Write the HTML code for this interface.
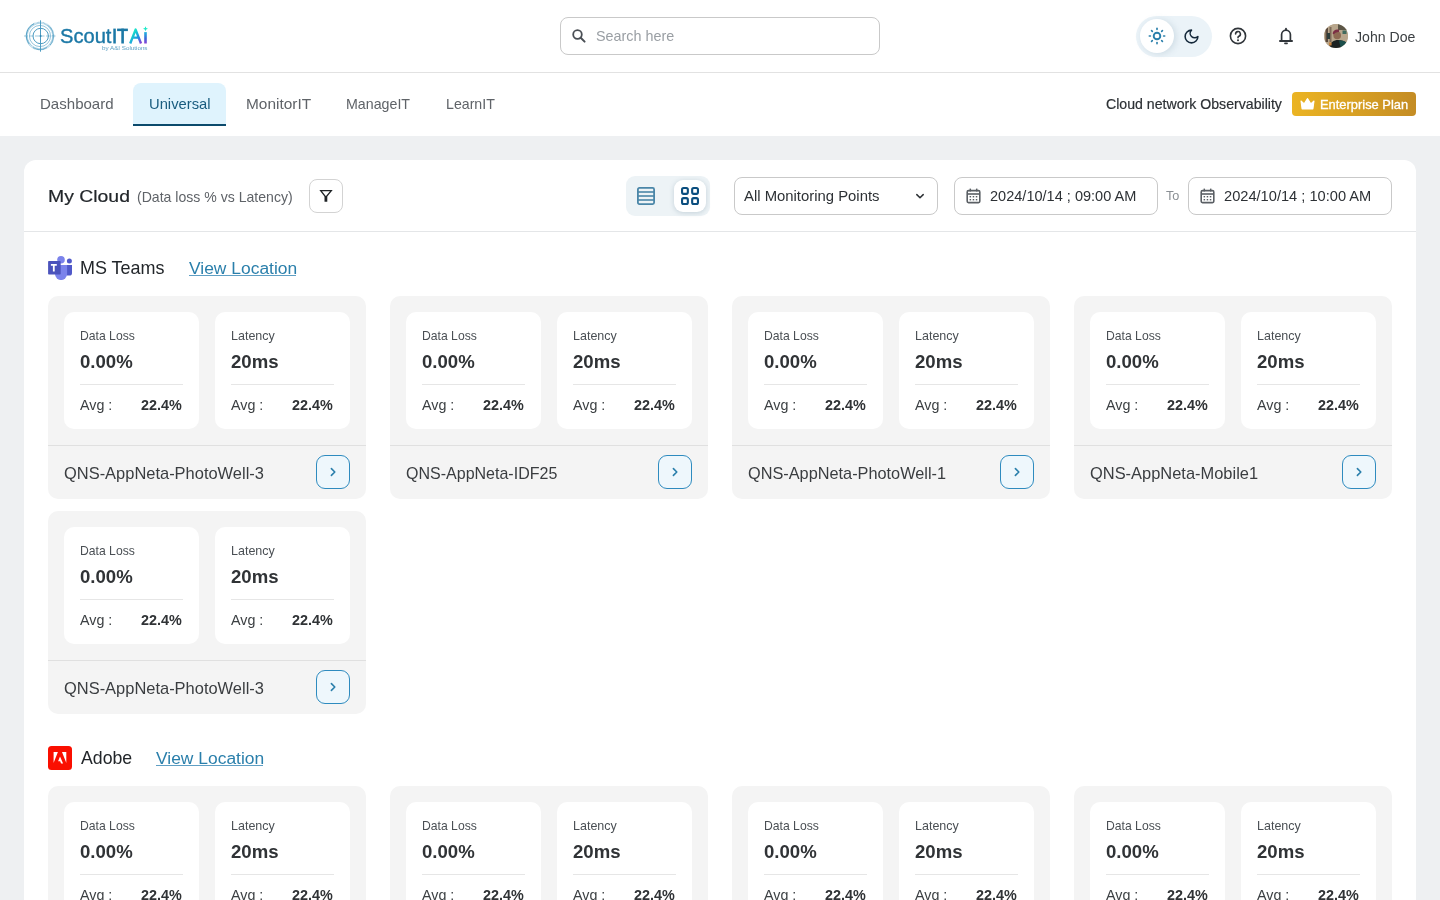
<!DOCTYPE html><html><head><meta charset="utf-8"><title>ScoutITAi</title><style>
*{margin:0;padding:0;box-sizing:border-box}
html,body{width:1440px;height:900px;overflow:hidden}
body{background:#eef0f2;font-family:"Liberation Sans",sans-serif;position:relative}
.abs,.t{position:absolute}
.t{white-space:nowrap;transform-origin:0 0}
#hdr{position:absolute;left:0;top:0;width:1440px;height:72px;background:#fff;border-bottom:1px solid #e2e2e2;height:73px}
#nav{position:absolute;left:0;top:73px;width:1440px;height:63px;background:#fff}
.card{position:absolute;width:318px;height:203px;background:#f4f4f4;border-radius:10px}
.inner{position:absolute;width:135px;height:117px;background:#fff;border-radius:10px}
.btn{width:34px;height:34px;border:1px solid #2e8bbf;border-radius:9px;background:#eef7fc}
</style></head><body><div id="hdr"></div><div id="nav"></div>
<svg class="abs" style="left:22px;top:18px" width="38" height="36" viewBox="0 0 38 36">
<g fill="none" stroke="#4d9cc2">
<circle cx="18" cy="18" r="13.2" stroke-width="2.2" stroke="#8dc0da" stroke-dasharray="0.7 0.5"/>
<path d="M7.2 26 A13.2 13.2 0 0 1 12 5.8" stroke-width="1" opacity=".9"/>
<path d="M25.5 7.2 A13.2 13.2 0 0 1 28 27" stroke-width="0.9" opacity=".8"/>
<path d="M25 29.5 A13.2 13.2 0 0 1 11 29.5" stroke-width="0.9" opacity=".8"/>
<circle cx="18" cy="18" r="10.6" stroke-width="0.8" opacity=".75"/>
<circle cx="18.7" cy="18" r="7.7" stroke-width="1"/>
<line x1="18.5" y1="2.3" x2="18.5" y2="33.7" stroke-width="1"/>
<line x1="2" y1="18" x2="35" y2="18" stroke-width="1" stroke-dasharray="4 1.5" opacity=".55"/>
</g><circle cx="18.5" cy="18" r="1.1" fill="#2f86b3"/></svg>
<div class="t" style="left:59.99px;top:25.00px;font-size:21px;line-height:21px;font-weight:400;color:#1b78a6;transform:scaleX(0.9581);-webkit-text-stroke:0.4px #1b78a6;">Scout</div>
<svg class="abs" style="left:110px;top:24px" width="40" height="22" viewBox="110 24 40 22">
<defs><linearGradient id="ga" x1="0" y1="0" x2="1" y2="1"><stop offset="0.15" stop-color="#16f0c6"/><stop offset="0.65" stop-color="#1e8fe0"/><stop offset="1" stop-color="#8a3fd6"/></linearGradient>
<linearGradient id="gi" x1="0" y1="0" x2="0" y2="1"><stop offset="0" stop-color="#1fb7e0"/><stop offset="0.55" stop-color="#3a6ad8"/><stop offset="1" stop-color="#8a3fd6"/></linearGradient></defs>
<rect x="113.3" y="28.6" width="2.5" height="14.9" fill="#1b78a6"/>
<rect x="117.1" y="28.6" width="10.8" height="2.5" fill="#1b78a6"/><rect x="121.3" y="28.6" width="2.6" height="14.9" fill="#1b78a6"/>
<path d="M130.2 43.5 L135.6 29.6 L141 43.5 M132.6 37.6 H138.6" fill="none" stroke="url(#ga)" stroke-width="2.4" stroke-linejoin="round"/>
<rect x="144.2" y="32.1" width="2.6" height="11.4" fill="url(#gi)"/>
<path d="M145.5 26.3 L146.2 28.1 L148 28.8 L146.2 29.5 L145.5 31.3 L144.8 29.5 L143 28.8 L144.8 28.1Z" fill="#1de9c8"/>
</svg>
<div class="t" style="left:101.62px;top:45.00px;font-size:6.2px;line-height:6.2px;font-weight:400;color:#5b9fc2;transform:scaleX(1.0095);">by A&amp;I Solutions</div>
<div class="abs" style="left:560px;top:17px;width:320px;height:38px;border:1px solid #c9c9c9;border-radius:8px;background:#fff"></div>
<svg class="abs" style="left:570px;top:27px" width="18" height="18" viewBox="0 0 18 18"><circle cx="7.5" cy="7.5" r="4.3" fill="none" stroke="#4a4f55" stroke-width="1.8"/><line x1="10.7" y1="10.7" x2="14.6" y2="14.6" stroke="#4a4f55" stroke-width="2" stroke-linecap="round"/></svg>
<div class="t" style="left:595.88px;top:29.00px;font-size:14.5px;line-height:14.5px;font-weight:400;color:#9a9fa4;transform:scaleX(0.9900);">Search here</div>
<div class="abs" style="left:1136px;top:15.5px;width:76px;height:41px;border-radius:21px;background:#ebf3f8"></div>
<div class="abs" style="left:1140px;top:19px;width:34px;height:34px;border-radius:17px;background:#fff;box-shadow:2px 1px 6px rgba(120,150,170,.25)"></div>
<svg class="abs" style="left:1145px;top:24px" width="24" height="24" viewBox="0 0 24 24"><circle cx="12" cy="12" r="3.3" fill="none" stroke="#2a7fab" stroke-width="1.9"/><line x1="18.60" y1="12.00" x2="19.70" y2="12.00" stroke="#2a7fab" stroke-width="1.6" stroke-linecap="round"/><line x1="16.67" y1="16.67" x2="17.44" y2="17.44" stroke="#2a7fab" stroke-width="1.6" stroke-linecap="round"/><line x1="12.00" y1="18.60" x2="12.00" y2="19.70" stroke="#2a7fab" stroke-width="1.6" stroke-linecap="round"/><line x1="7.33" y1="16.67" x2="6.56" y2="17.44" stroke="#2a7fab" stroke-width="1.6" stroke-linecap="round"/><line x1="5.40" y1="12.00" x2="4.30" y2="12.00" stroke="#2a7fab" stroke-width="1.6" stroke-linecap="round"/><line x1="7.33" y1="7.33" x2="6.56" y2="6.56" stroke="#2a7fab" stroke-width="1.6" stroke-linecap="round"/><line x1="12.00" y1="5.40" x2="12.00" y2="4.30" stroke="#2a7fab" stroke-width="1.6" stroke-linecap="round"/><line x1="16.67" y1="7.33" x2="17.44" y2="6.56" stroke="#2a7fab" stroke-width="1.6" stroke-linecap="round"/></svg>
<svg class="abs" style="left:1182.5px;top:27.8px" width="17" height="17" viewBox="0 0 24 24"><path d="M12 3a6 6 0 0 0 9 9 9 9 0 1 1-9-9Z" fill="none" stroke="#14283a" stroke-width="2.2" stroke-linejoin="round"/></svg>
<svg class="abs" style="left:1226px;top:24px" width="24" height="24" viewBox="0 0 24 24"><circle cx="12" cy="12" r="7.6" fill="none" stroke="#30353a" stroke-width="1.6"/><path d="M9.6 10 A2.4 2.4 0 1 1 12.9 12.2 C12.2 12.5 12 12.9 12 13.7" fill="none" stroke="#30353a" stroke-width="1.6" stroke-linecap="round"/><circle cx="12" cy="16.3" r="1" fill="#30353a"/></svg>
<svg class="abs" style="left:1274px;top:24px" width="24" height="24" viewBox="0 0 24 24"><path d="M7.6 17 V10.6 A4.4 4.4 0 0 1 16.4 10.6 V17" fill="none" stroke="#30353a" stroke-width="1.7"/><line x1="6" y1="17.1" x2="18" y2="17.1" stroke="#30353a" stroke-width="2" stroke-linecap="round"/><line x1="12" y1="4.6" x2="12" y2="6" stroke="#30353a" stroke-width="1.8" stroke-linecap="round"/><path d="M10.9 19.4 H13.1" stroke="#30353a" stroke-width="1.6" stroke-linecap="round"/></svg>
<svg class="abs" style="left:1324px;top:24px" width="24" height="24" viewBox="0 0 24 24"><defs><clipPath id="av"><circle cx="12" cy="12" r="12"/></clipPath><filter id="bl" x="-20%" y="-20%" width="140%" height="140%"><feGaussianBlur stdDeviation="0.45"/></filter></defs><g clip-path="url(#av)"><rect width="24" height="24" fill="#b8a68c"/><g filter="url(#bl)">
<rect x="-1" y="-1" width="26" height="26" fill="#b8a68c"/>
<rect x="1.5" y="4" width="2.5" height="14" fill="#5a4a3c"/><rect x="5.5" y="3" width="2" height="15" fill="#7d6b58"/><rect x="3" y="9" width="3" height="6" fill="#2e3c3a"/>
<rect x="14" y="0" width="10" height="6" fill="#5b5646"/><rect x="18.5" y="6.5" width="4" height="3.5" fill="#3f6a5c"/>
<circle cx="13.2" cy="11.4" r="3.8" fill="#8e6a52"/>
<path d="M8.6 9.2 Q10 4.8 14.5 5.6 Q15.6 6.6 15 8 Q11.5 7.5 9.5 10.5Z" fill="#7c2d45"/>
<path d="M4 25 Q6 17 12.5 16 Q19 15.5 23 19 V25Z" fill="#1a2322"/><path d="M15 16.5 Q21 16 24 20 V25 H17Z" fill="#1e4f4c"/>
<rect x="5" y="18.5" width="2.6" height="3" fill="#c47f3a"/>
</g></g></svg>
<div class="t" style="left:1355.32px;top:29.00px;font-size:15px;line-height:15px;font-weight:400;color:#3c4043;transform:scaleX(0.9390);">John Doe</div>
<div class="abs" style="left:133px;top:83px;width:93px;height:41px;background:#dff3fd;border-radius:8px 8px 0 0"></div>
<div class="abs" style="left:133px;top:124px;width:93px;height:2px;background:#0b4a6c"></div>
<div class="t" style="left:39.60px;top:97.00px;font-size:14.3px;line-height:14.3px;font-weight:400;color:#5f6368;transform:scaleX(1.0526);">Dashboard</div>
<div class="t" style="left:148.82px;top:97.00px;font-size:14.3px;line-height:14.3px;font-weight:400;color:#195c7f;transform:scaleX(1.0325);">Universal</div>
<div class="t" style="left:245.77px;top:97.00px;font-size:14.3px;line-height:14.3px;font-weight:400;color:#5f6368;transform:scaleX(1.0778);">MonitorIT</div>
<div class="t" style="left:346.16px;top:97.00px;font-size:14.3px;line-height:14.3px;font-weight:400;color:#5f6368;transform:scaleX(0.9949);">ManageIT</div>
<div class="t" style="left:445.87px;top:97.00px;font-size:14.3px;line-height:14.3px;font-weight:400;color:#5f6368;transform:scaleX(0.9915);">LearnIT</div>
<div class="t" style="left:1106.19px;top:97.00px;font-size:14.6px;line-height:14.6px;font-weight:400;color:#2d3135;transform:scaleX(0.9683);-webkit-text-stroke:0.2px #2d3135;">Cloud network Observability</div>
<div class="abs" style="left:1292px;top:92.3px;width:124px;height:24px;border-radius:4px;background:linear-gradient(90deg,#ebb423,#c48c24)"></div>
<svg class="abs" style="left:1299px;top:96px" width="17" height="17" viewBox="0 0 17 17"><path d="M2 5 L5.2 7.8 L8.5 2.6 L11.8 7.8 L15 5 L13.9 13 H3.1Z" fill="#fff" stroke="#fff" stroke-width="1.1" stroke-linejoin="round"/></svg>
<div class="t" style="left:1320.17px;top:99.00px;font-size:12.8px;line-height:12.8px;font-weight:400;color:#fff;transform:scaleX(1.0078);-webkit-text-stroke:0.3px #fff;">Enterprise Plan</div>
<div class="abs" style="left:24px;top:160px;width:1392px;height:760px;background:#fff;border-radius:12px"></div>
<div class="abs" style="left:24px;top:231px;width:1392px;height:1px;background:#e4e6e8"></div>
<div class="t" style="left:47.65px;top:188.00px;font-size:17.4px;line-height:17.4px;font-weight:400;color:#22262a;transform:scaleX(1.1156);-webkit-text-stroke:0.2px #22262a;">My Cloud</div>
<div class="t" style="left:136.96px;top:190.00px;font-size:14.8px;line-height:14.8px;font-weight:400;color:#5f6368;transform:scaleX(0.9511);">(Data loss % vs Latency)</div>
<div class="abs" style="left:309px;top:179px;width:34px;height:34px;border:1px solid #d3d3d3;border-radius:8px;background:#fff"></div>
<svg class="abs" style="left:317px;top:187px" width="18" height="18" viewBox="0 0 18 18"><path d="M3.7 3.7 H14.3 L8.85 10.2Z" fill="none" stroke="#1f2326" stroke-width="1.3" stroke-linejoin="miter"/><rect x="7.5" y="9.3" width="2.8" height="5.5" rx="0.4" fill="#1f2326"/></svg>
<div class="abs" style="left:626px;top:176px;width:84px;height:40px;border-radius:9px;background:#edf3f6"></div>
<div class="abs" style="left:674px;top:180px;width:32px;height:32px;border-radius:9px;background:#fff;box-shadow:0 1px 5px rgba(100,130,150,.3)"></div>
<svg class="abs" style="left:637px;top:187px" width="18" height="18" viewBox="0 0 18 18"><rect x="0.9" y="0.9" width="16.2" height="16.2" rx="1.5" fill="none" stroke="#4a86a8" stroke-width="1.8"/><line x1="1" y1="5" x2="17" y2="5" stroke="#4a86a8" stroke-width="1.6"/><line x1="1" y1="9" x2="17" y2="9" stroke="#4a86a8" stroke-width="1.6"/><line x1="1" y1="13" x2="17" y2="13" stroke="#4a86a8" stroke-width="1.6"/></svg>
<svg class="abs" style="left:681px;top:187px" width="18" height="18" viewBox="0 0 18 18"><g fill="none" stroke="#0b4e7f" stroke-width="2.1"><rect x="1.05" y="1.05" width="5.8" height="5.8" rx="1.5"/><rect x="11.15" y="1.05" width="5.8" height="5.8" rx="1.5"/><rect x="1.05" y="11.15" width="5.8" height="5.8" rx="1.5"/><rect x="11.15" y="11.15" width="5.8" height="5.8" rx="1.5"/></g></svg>
<div class="abs" style="left:734px;top:177px;width:204px;height:38px;border:1px solid #c9c9c9;border-radius:8px;background:#fff"></div>
<div class="t" style="left:744.00px;top:189.00px;font-size:14.3px;line-height:14.3px;font-weight:400;color:#2d3135;transform:scaleX(1.0397);">All Monitoring Points</div>
<svg class="abs" style="left:914px;top:190px" width="12" height="12" viewBox="0 0 12 12"><path d="M2.8 4.6 L6 7.8 L9.2 4.6" fill="none" stroke="#2d3135" stroke-width="1.5" stroke-linecap="round" stroke-linejoin="round"/></svg>
<div class="abs" style="left:954px;top:177px;width:204px;height:38px;border:1px solid #c9c9c9;border-radius:8px;background:#fff"></div>
<svg class="abs" style="left:966px;top:188px" width="15" height="16" viewBox="0 0 15 16"><rect x="1.2" y="2.6" width="12.6" height="12" rx="1.3" fill="none" stroke="#5a5f64" stroke-width="1.6"/><line x1="1.2" y1="6" x2="13.8" y2="6" stroke="#5a5f64" stroke-width="1.6"/><line x1="4.3" y1="0.6" x2="4.3" y2="3.5" stroke="#5a5f64" stroke-width="1.5"/><line x1="10.7" y1="0.6" x2="10.7" y2="3.5" stroke="#5a5f64" stroke-width="1.5"/><g fill="#5a5f64"><rect x="3.6" y="8" width="1.5" height="1.4"/><rect x="6.7" y="8" width="1.5" height="1.4"/><rect x="9.8" y="8" width="1.5" height="1.4"/><rect x="3.6" y="11" width="1.5" height="1.4"/><rect x="6.7" y="11" width="1.5" height="1.4"/><rect x="9.8" y="11" width="1.5" height="1.4"/></g></svg>
<div class="t" style="left:989.87px;top:189.00px;font-size:14.2px;line-height:14.2px;font-weight:400;color:#2d3135;transform:scaleX(1.0248);">2024/10/14 ; 09:00 AM</div>
<div class="t" style="left:1166.45px;top:190.00px;font-size:12.6px;line-height:12.6px;font-weight:400;color:#8a8f94;transform:scaleX(1.0079);">To</div>
<div class="abs" style="left:1188px;top:177px;width:204px;height:38px;border:1px solid #c9c9c9;border-radius:8px;background:#fff"></div>
<svg class="abs" style="left:1200px;top:188px" width="15" height="16" viewBox="0 0 15 16"><rect x="1.2" y="2.6" width="12.6" height="12" rx="1.3" fill="none" stroke="#5a5f64" stroke-width="1.6"/><line x1="1.2" y1="6" x2="13.8" y2="6" stroke="#5a5f64" stroke-width="1.6"/><line x1="4.3" y1="0.6" x2="4.3" y2="3.5" stroke="#5a5f64" stroke-width="1.5"/><line x1="10.7" y1="0.6" x2="10.7" y2="3.5" stroke="#5a5f64" stroke-width="1.5"/><g fill="#5a5f64"><rect x="3.6" y="8" width="1.5" height="1.4"/><rect x="6.7" y="8" width="1.5" height="1.4"/><rect x="9.8" y="8" width="1.5" height="1.4"/><rect x="3.6" y="11" width="1.5" height="1.4"/><rect x="6.7" y="11" width="1.5" height="1.4"/><rect x="9.8" y="11" width="1.5" height="1.4"/></g></svg>
<div class="t" style="left:1223.87px;top:189.00px;font-size:14.2px;line-height:14.2px;font-weight:400;color:#2d3135;transform:scaleX(1.0312);">2024/10/14 ; 10:00 AM</div>
<svg class="abs" style="left:48px;top:256px" width="24" height="24" viewBox="0 0 24 24">
<circle cx="21.4" cy="4.9" r="2.5" fill="#5059c9"/><path d="M18.5 9 H24 V17 A2.6 2.6 0 0 1 21.4 19.6 H18.5Z" fill="#5059c9"/>
<circle cx="13" cy="3.8" r="3.8" fill="#7b83eb"/><path d="M7 9 H19.1 V18 A6 6 0 0 1 7 18Z" fill="#7b83eb"/>
<rect x="0.1" y="5" width="12.6" height="13.6" rx="0.8" fill="#4b53bc"/>
<path d="M2.9 8.1 H8.8 V9.7 H6.7 V15.6 H4.9 V9.7 H2.9Z" fill="#fff"/></svg>
<div class="t" style="left:79.56px;top:259.00px;font-size:18.2px;line-height:18.2px;font-weight:400;color:#22262a;transform:scaleX(0.9876);">MS Teams</div>
<div class="t" style="left:189.00px;top:261.00px;font-size:15.8px;line-height:15.8px;font-weight:400;color:#2a7fab;transform:scaleX(1.1030);">View Location</div>
<div class="abs" style="left:189px;top:275.4px;width:107px;height:1px;background:#5f9fc4"></div>
<div class="card" style="left:48px;top:296px">
<div class="inner" style="left:16px;top:16px">
<div class="t" style="left:15.83px;top:18.00px;font-size:12.6px;line-height:12.6px;font-weight:400;color:#4a4f54;transform:scaleX(0.9672);">Data Loss</div>
<div class="t" style="left:15.86px;top:42.00px;font-size:17.9px;line-height:17.9px;font-weight:700;color:#303336;transform:scaleX(1.0387);">0.00%</div>
<div class="abs" style="left:16px;top:71.5px;width:103px;height:1px;background:#e6e6e6"></div>
<div class="t" style="left:16.00px;top:86.00px;font-size:14.3px;line-height:14.3px;font-weight:400;color:#3c4043;transform:scaleX(0.9990);">Avg :</div>
<div class="t" style="left:77.47px;top:86.00px;font-size:14.3px;line-height:14.3px;font-weight:700;color:#303336;transform:scaleX(1.0062);">22.4%</div>
</div>
<div class="inner" style="left:167px;top:16px">
<div class="t" style="left:15.80px;top:18.00px;font-size:12.6px;line-height:12.6px;font-weight:400;color:#4a4f54;transform:scaleX(0.9932);">Latency</div>
<div class="t" style="left:16.04px;top:42.00px;font-size:17.9px;line-height:17.9px;font-weight:700;color:#303336;transform:scaleX(1.0388);">20ms</div>
<div class="abs" style="left:16px;top:71.5px;width:103px;height:1px;background:#e6e6e6"></div>
<div class="t" style="left:16.00px;top:86.00px;font-size:14.3px;line-height:14.3px;font-weight:400;color:#3c4043;transform:scaleX(0.9990);">Avg :</div>
<div class="t" style="left:77.47px;top:86.00px;font-size:14.3px;line-height:14.3px;font-weight:700;color:#303336;transform:scaleX(1.0062);">22.4%</div>
</div>
<div class="abs" style="left:0;top:149px;width:318px;height:1px;background:#e0e0e0"></div>
<div class="t" style="left:15.78px;top:170.00px;font-size:15.9px;line-height:15.9px;font-weight:400;color:#3a3d40;transform:scaleX(1.0352);">QNS-AppNeta-PhotoWell-3</div>
<div class="abs btn" style="left:268px;top:159px"></div>
<svg class="abs" style="left:278px;top:169px" width="14" height="14" viewBox="0 0 14 14"><path d="M5.4 3.6 L8.8 7 L5.4 10.4" fill="none" stroke="#2a7fab" stroke-width="1.6" stroke-linecap="round" stroke-linejoin="round"/></svg>
</div>
<div class="card" style="left:390px;top:296px">
<div class="inner" style="left:16px;top:16px">
<div class="t" style="left:15.83px;top:18.00px;font-size:12.6px;line-height:12.6px;font-weight:400;color:#4a4f54;transform:scaleX(0.9672);">Data Loss</div>
<div class="t" style="left:15.86px;top:42.00px;font-size:17.9px;line-height:17.9px;font-weight:700;color:#303336;transform:scaleX(1.0387);">0.00%</div>
<div class="abs" style="left:16px;top:71.5px;width:103px;height:1px;background:#e6e6e6"></div>
<div class="t" style="left:16.00px;top:86.00px;font-size:14.3px;line-height:14.3px;font-weight:400;color:#3c4043;transform:scaleX(0.9990);">Avg :</div>
<div class="t" style="left:77.47px;top:86.00px;font-size:14.3px;line-height:14.3px;font-weight:700;color:#303336;transform:scaleX(1.0062);">22.4%</div>
</div>
<div class="inner" style="left:167px;top:16px">
<div class="t" style="left:15.80px;top:18.00px;font-size:12.6px;line-height:12.6px;font-weight:400;color:#4a4f54;transform:scaleX(0.9932);">Latency</div>
<div class="t" style="left:16.04px;top:42.00px;font-size:17.9px;line-height:17.9px;font-weight:700;color:#303336;transform:scaleX(1.0388);">20ms</div>
<div class="abs" style="left:16px;top:71.5px;width:103px;height:1px;background:#e6e6e6"></div>
<div class="t" style="left:16.00px;top:86.00px;font-size:14.3px;line-height:14.3px;font-weight:400;color:#3c4043;transform:scaleX(0.9990);">Avg :</div>
<div class="t" style="left:77.47px;top:86.00px;font-size:14.3px;line-height:14.3px;font-weight:700;color:#303336;transform:scaleX(1.0062);">22.4%</div>
</div>
<div class="abs" style="left:0;top:149px;width:318px;height:1px;background:#e0e0e0"></div>
<div class="t" style="left:15.80px;top:170.00px;font-size:15.9px;line-height:15.9px;font-weight:400;color:#3a3d40;transform:scaleX(1.0079);">QNS-AppNeta-IDF25</div>
<div class="abs btn" style="left:268px;top:159px"></div>
<svg class="abs" style="left:278px;top:169px" width="14" height="14" viewBox="0 0 14 14"><path d="M5.4 3.6 L8.8 7 L5.4 10.4" fill="none" stroke="#2a7fab" stroke-width="1.6" stroke-linecap="round" stroke-linejoin="round"/></svg>
</div>
<div class="card" style="left:732px;top:296px">
<div class="inner" style="left:16px;top:16px">
<div class="t" style="left:15.83px;top:18.00px;font-size:12.6px;line-height:12.6px;font-weight:400;color:#4a4f54;transform:scaleX(0.9672);">Data Loss</div>
<div class="t" style="left:15.86px;top:42.00px;font-size:17.9px;line-height:17.9px;font-weight:700;color:#303336;transform:scaleX(1.0387);">0.00%</div>
<div class="abs" style="left:16px;top:71.5px;width:103px;height:1px;background:#e6e6e6"></div>
<div class="t" style="left:16.00px;top:86.00px;font-size:14.3px;line-height:14.3px;font-weight:400;color:#3c4043;transform:scaleX(0.9990);">Avg :</div>
<div class="t" style="left:77.47px;top:86.00px;font-size:14.3px;line-height:14.3px;font-weight:700;color:#303336;transform:scaleX(1.0062);">22.4%</div>
</div>
<div class="inner" style="left:167px;top:16px">
<div class="t" style="left:15.80px;top:18.00px;font-size:12.6px;line-height:12.6px;font-weight:400;color:#4a4f54;transform:scaleX(0.9932);">Latency</div>
<div class="t" style="left:16.04px;top:42.00px;font-size:17.9px;line-height:17.9px;font-weight:700;color:#303336;transform:scaleX(1.0388);">20ms</div>
<div class="abs" style="left:16px;top:71.5px;width:103px;height:1px;background:#e6e6e6"></div>
<div class="t" style="left:16.00px;top:86.00px;font-size:14.3px;line-height:14.3px;font-weight:400;color:#3c4043;transform:scaleX(0.9990);">Avg :</div>
<div class="t" style="left:77.47px;top:86.00px;font-size:14.3px;line-height:14.3px;font-weight:700;color:#303336;transform:scaleX(1.0062);">22.4%</div>
</div>
<div class="abs" style="left:0;top:149px;width:318px;height:1px;background:#e0e0e0"></div>
<div class="t" style="left:15.78px;top:170.00px;font-size:15.9px;line-height:15.9px;font-weight:400;color:#3a3d40;transform:scaleX(1.0253);">QNS-AppNeta-PhotoWell-1</div>
<div class="abs btn" style="left:268px;top:159px"></div>
<svg class="abs" style="left:278px;top:169px" width="14" height="14" viewBox="0 0 14 14"><path d="M5.4 3.6 L8.8 7 L5.4 10.4" fill="none" stroke="#2a7fab" stroke-width="1.6" stroke-linecap="round" stroke-linejoin="round"/></svg>
</div>
<div class="card" style="left:1074px;top:296px">
<div class="inner" style="left:16px;top:16px">
<div class="t" style="left:15.83px;top:18.00px;font-size:12.6px;line-height:12.6px;font-weight:400;color:#4a4f54;transform:scaleX(0.9672);">Data Loss</div>
<div class="t" style="left:15.86px;top:42.00px;font-size:17.9px;line-height:17.9px;font-weight:700;color:#303336;transform:scaleX(1.0387);">0.00%</div>
<div class="abs" style="left:16px;top:71.5px;width:103px;height:1px;background:#e6e6e6"></div>
<div class="t" style="left:16.00px;top:86.00px;font-size:14.3px;line-height:14.3px;font-weight:400;color:#3c4043;transform:scaleX(0.9990);">Avg :</div>
<div class="t" style="left:77.47px;top:86.00px;font-size:14.3px;line-height:14.3px;font-weight:700;color:#303336;transform:scaleX(1.0062);">22.4%</div>
</div>
<div class="inner" style="left:167px;top:16px">
<div class="t" style="left:15.80px;top:18.00px;font-size:12.6px;line-height:12.6px;font-weight:400;color:#4a4f54;transform:scaleX(0.9932);">Latency</div>
<div class="t" style="left:16.04px;top:42.00px;font-size:17.9px;line-height:17.9px;font-weight:700;color:#303336;transform:scaleX(1.0388);">20ms</div>
<div class="abs" style="left:16px;top:71.5px;width:103px;height:1px;background:#e6e6e6"></div>
<div class="t" style="left:16.00px;top:86.00px;font-size:14.3px;line-height:14.3px;font-weight:400;color:#3c4043;transform:scaleX(0.9990);">Avg :</div>
<div class="t" style="left:77.47px;top:86.00px;font-size:14.3px;line-height:14.3px;font-weight:700;color:#303336;transform:scaleX(1.0062);">22.4%</div>
</div>
<div class="abs" style="left:0;top:149px;width:318px;height:1px;background:#e0e0e0"></div>
<div class="t" style="left:15.78px;top:170.00px;font-size:15.9px;line-height:15.9px;font-weight:400;color:#3a3d40;transform:scaleX(1.0344);">QNS-AppNeta-Mobile1</div>
<div class="abs btn" style="left:268px;top:159px"></div>
<svg class="abs" style="left:278px;top:169px" width="14" height="14" viewBox="0 0 14 14"><path d="M5.4 3.6 L8.8 7 L5.4 10.4" fill="none" stroke="#2a7fab" stroke-width="1.6" stroke-linecap="round" stroke-linejoin="round"/></svg>
</div>
<div class="card" style="left:48px;top:511px">
<div class="inner" style="left:16px;top:16px">
<div class="t" style="left:15.83px;top:18.00px;font-size:12.6px;line-height:12.6px;font-weight:400;color:#4a4f54;transform:scaleX(0.9672);">Data Loss</div>
<div class="t" style="left:15.86px;top:42.00px;font-size:17.9px;line-height:17.9px;font-weight:700;color:#303336;transform:scaleX(1.0387);">0.00%</div>
<div class="abs" style="left:16px;top:71.5px;width:103px;height:1px;background:#e6e6e6"></div>
<div class="t" style="left:16.00px;top:86.00px;font-size:14.3px;line-height:14.3px;font-weight:400;color:#3c4043;transform:scaleX(0.9990);">Avg :</div>
<div class="t" style="left:77.47px;top:86.00px;font-size:14.3px;line-height:14.3px;font-weight:700;color:#303336;transform:scaleX(1.0062);">22.4%</div>
</div>
<div class="inner" style="left:167px;top:16px">
<div class="t" style="left:15.80px;top:18.00px;font-size:12.6px;line-height:12.6px;font-weight:400;color:#4a4f54;transform:scaleX(0.9932);">Latency</div>
<div class="t" style="left:16.04px;top:42.00px;font-size:17.9px;line-height:17.9px;font-weight:700;color:#303336;transform:scaleX(1.0388);">20ms</div>
<div class="abs" style="left:16px;top:71.5px;width:103px;height:1px;background:#e6e6e6"></div>
<div class="t" style="left:16.00px;top:86.00px;font-size:14.3px;line-height:14.3px;font-weight:400;color:#3c4043;transform:scaleX(0.9990);">Avg :</div>
<div class="t" style="left:77.47px;top:86.00px;font-size:14.3px;line-height:14.3px;font-weight:700;color:#303336;transform:scaleX(1.0062);">22.4%</div>
</div>
<div class="abs" style="left:0;top:149px;width:318px;height:1px;background:#e0e0e0"></div>
<div class="t" style="left:15.78px;top:170.00px;font-size:15.9px;line-height:15.9px;font-weight:400;color:#3a3d40;transform:scaleX(1.0352);">QNS-AppNeta-PhotoWell-3</div>
<div class="abs btn" style="left:268px;top:159px"></div>
<svg class="abs" style="left:278px;top:169px" width="14" height="14" viewBox="0 0 14 14"><path d="M5.4 3.6 L8.8 7 L5.4 10.4" fill="none" stroke="#2a7fab" stroke-width="1.6" stroke-linecap="round" stroke-linejoin="round"/></svg>
</div>
<svg class="abs" style="left:48px;top:746px" width="24" height="24" viewBox="0 0 24 24">
<rect width="24" height="24" rx="3.5" fill="#fa0f00"/>
<path d="M5.6 6.1 H9.9 L5.6 17Z M14 6.1 H18.3 V17Z M12 10.6 L15.1 17.5 H13 L12.2 15.3 H10.1Z" fill="#fff"/></svg>
<div class="t" style="left:81.00px;top:749.00px;font-size:18.2px;line-height:18.2px;font-weight:400;color:#22262a;transform:scaleX(0.9736);">Adobe</div>
<div class="t" style="left:156.00px;top:751.00px;font-size:15.8px;line-height:15.8px;font-weight:400;color:#2a7fab;transform:scaleX(1.1030);">View Location</div>
<div class="abs" style="left:156px;top:765.4px;width:107px;height:1px;background:#5f9fc4"></div>
<div class="card" style="left:48px;top:786px">
<div class="inner" style="left:16px;top:16px">
<div class="t" style="left:15.83px;top:18.00px;font-size:12.6px;line-height:12.6px;font-weight:400;color:#4a4f54;transform:scaleX(0.9672);">Data Loss</div>
<div class="t" style="left:15.86px;top:42.00px;font-size:17.9px;line-height:17.9px;font-weight:700;color:#303336;transform:scaleX(1.0387);">0.00%</div>
<div class="abs" style="left:16px;top:71.5px;width:103px;height:1px;background:#e6e6e6"></div>
<div class="t" style="left:16.00px;top:86.00px;font-size:14.3px;line-height:14.3px;font-weight:400;color:#3c4043;transform:scaleX(0.9990);">Avg :</div>
<div class="t" style="left:77.47px;top:86.00px;font-size:14.3px;line-height:14.3px;font-weight:700;color:#303336;transform:scaleX(1.0062);">22.4%</div>
</div>
<div class="inner" style="left:167px;top:16px">
<div class="t" style="left:15.80px;top:18.00px;font-size:12.6px;line-height:12.6px;font-weight:400;color:#4a4f54;transform:scaleX(0.9932);">Latency</div>
<div class="t" style="left:16.04px;top:42.00px;font-size:17.9px;line-height:17.9px;font-weight:700;color:#303336;transform:scaleX(1.0388);">20ms</div>
<div class="abs" style="left:16px;top:71.5px;width:103px;height:1px;background:#e6e6e6"></div>
<div class="t" style="left:16.00px;top:86.00px;font-size:14.3px;line-height:14.3px;font-weight:400;color:#3c4043;transform:scaleX(0.9990);">Avg :</div>
<div class="t" style="left:77.47px;top:86.00px;font-size:14.3px;line-height:14.3px;font-weight:700;color:#303336;transform:scaleX(1.0062);">22.4%</div>
</div>
<div class="abs" style="left:0;top:149px;width:318px;height:1px;background:#e0e0e0"></div>
<div class="t" style="left:15.78px;top:170.00px;font-size:15.9px;line-height:15.9px;font-weight:400;color:#3a3d40;transform:scaleX(1.0352);">QNS-AppNeta-PhotoWell-3</div>
<div class="abs btn" style="left:268px;top:159px"></div>
<svg class="abs" style="left:278px;top:169px" width="14" height="14" viewBox="0 0 14 14"><path d="M5.4 3.6 L8.8 7 L5.4 10.4" fill="none" stroke="#2a7fab" stroke-width="1.6" stroke-linecap="round" stroke-linejoin="round"/></svg>
</div>
<div class="card" style="left:390px;top:786px">
<div class="inner" style="left:16px;top:16px">
<div class="t" style="left:15.83px;top:18.00px;font-size:12.6px;line-height:12.6px;font-weight:400;color:#4a4f54;transform:scaleX(0.9672);">Data Loss</div>
<div class="t" style="left:15.86px;top:42.00px;font-size:17.9px;line-height:17.9px;font-weight:700;color:#303336;transform:scaleX(1.0387);">0.00%</div>
<div class="abs" style="left:16px;top:71.5px;width:103px;height:1px;background:#e6e6e6"></div>
<div class="t" style="left:16.00px;top:86.00px;font-size:14.3px;line-height:14.3px;font-weight:400;color:#3c4043;transform:scaleX(0.9990);">Avg :</div>
<div class="t" style="left:77.47px;top:86.00px;font-size:14.3px;line-height:14.3px;font-weight:700;color:#303336;transform:scaleX(1.0062);">22.4%</div>
</div>
<div class="inner" style="left:167px;top:16px">
<div class="t" style="left:15.80px;top:18.00px;font-size:12.6px;line-height:12.6px;font-weight:400;color:#4a4f54;transform:scaleX(0.9932);">Latency</div>
<div class="t" style="left:16.04px;top:42.00px;font-size:17.9px;line-height:17.9px;font-weight:700;color:#303336;transform:scaleX(1.0388);">20ms</div>
<div class="abs" style="left:16px;top:71.5px;width:103px;height:1px;background:#e6e6e6"></div>
<div class="t" style="left:16.00px;top:86.00px;font-size:14.3px;line-height:14.3px;font-weight:400;color:#3c4043;transform:scaleX(0.9990);">Avg :</div>
<div class="t" style="left:77.47px;top:86.00px;font-size:14.3px;line-height:14.3px;font-weight:700;color:#303336;transform:scaleX(1.0062);">22.4%</div>
</div>
<div class="abs" style="left:0;top:149px;width:318px;height:1px;background:#e0e0e0"></div>
<div class="t" style="left:15.80px;top:170.00px;font-size:15.9px;line-height:15.9px;font-weight:400;color:#3a3d40;transform:scaleX(1.0079);">QNS-AppNeta-IDF25</div>
<div class="abs btn" style="left:268px;top:159px"></div>
<svg class="abs" style="left:278px;top:169px" width="14" height="14" viewBox="0 0 14 14"><path d="M5.4 3.6 L8.8 7 L5.4 10.4" fill="none" stroke="#2a7fab" stroke-width="1.6" stroke-linecap="round" stroke-linejoin="round"/></svg>
</div>
<div class="card" style="left:732px;top:786px">
<div class="inner" style="left:16px;top:16px">
<div class="t" style="left:15.83px;top:18.00px;font-size:12.6px;line-height:12.6px;font-weight:400;color:#4a4f54;transform:scaleX(0.9672);">Data Loss</div>
<div class="t" style="left:15.86px;top:42.00px;font-size:17.9px;line-height:17.9px;font-weight:700;color:#303336;transform:scaleX(1.0387);">0.00%</div>
<div class="abs" style="left:16px;top:71.5px;width:103px;height:1px;background:#e6e6e6"></div>
<div class="t" style="left:16.00px;top:86.00px;font-size:14.3px;line-height:14.3px;font-weight:400;color:#3c4043;transform:scaleX(0.9990);">Avg :</div>
<div class="t" style="left:77.47px;top:86.00px;font-size:14.3px;line-height:14.3px;font-weight:700;color:#303336;transform:scaleX(1.0062);">22.4%</div>
</div>
<div class="inner" style="left:167px;top:16px">
<div class="t" style="left:15.80px;top:18.00px;font-size:12.6px;line-height:12.6px;font-weight:400;color:#4a4f54;transform:scaleX(0.9932);">Latency</div>
<div class="t" style="left:16.04px;top:42.00px;font-size:17.9px;line-height:17.9px;font-weight:700;color:#303336;transform:scaleX(1.0388);">20ms</div>
<div class="abs" style="left:16px;top:71.5px;width:103px;height:1px;background:#e6e6e6"></div>
<div class="t" style="left:16.00px;top:86.00px;font-size:14.3px;line-height:14.3px;font-weight:400;color:#3c4043;transform:scaleX(0.9990);">Avg :</div>
<div class="t" style="left:77.47px;top:86.00px;font-size:14.3px;line-height:14.3px;font-weight:700;color:#303336;transform:scaleX(1.0062);">22.4%</div>
</div>
<div class="abs" style="left:0;top:149px;width:318px;height:1px;background:#e0e0e0"></div>
<div class="t" style="left:15.78px;top:170.00px;font-size:15.9px;line-height:15.9px;font-weight:400;color:#3a3d40;transform:scaleX(1.0253);">QNS-AppNeta-PhotoWell-1</div>
<div class="abs btn" style="left:268px;top:159px"></div>
<svg class="abs" style="left:278px;top:169px" width="14" height="14" viewBox="0 0 14 14"><path d="M5.4 3.6 L8.8 7 L5.4 10.4" fill="none" stroke="#2a7fab" stroke-width="1.6" stroke-linecap="round" stroke-linejoin="round"/></svg>
</div>
<div class="card" style="left:1074px;top:786px">
<div class="inner" style="left:16px;top:16px">
<div class="t" style="left:15.83px;top:18.00px;font-size:12.6px;line-height:12.6px;font-weight:400;color:#4a4f54;transform:scaleX(0.9672);">Data Loss</div>
<div class="t" style="left:15.86px;top:42.00px;font-size:17.9px;line-height:17.9px;font-weight:700;color:#303336;transform:scaleX(1.0387);">0.00%</div>
<div class="abs" style="left:16px;top:71.5px;width:103px;height:1px;background:#e6e6e6"></div>
<div class="t" style="left:16.00px;top:86.00px;font-size:14.3px;line-height:14.3px;font-weight:400;color:#3c4043;transform:scaleX(0.9990);">Avg :</div>
<div class="t" style="left:77.47px;top:86.00px;font-size:14.3px;line-height:14.3px;font-weight:700;color:#303336;transform:scaleX(1.0062);">22.4%</div>
</div>
<div class="inner" style="left:167px;top:16px">
<div class="t" style="left:15.80px;top:18.00px;font-size:12.6px;line-height:12.6px;font-weight:400;color:#4a4f54;transform:scaleX(0.9932);">Latency</div>
<div class="t" style="left:16.04px;top:42.00px;font-size:17.9px;line-height:17.9px;font-weight:700;color:#303336;transform:scaleX(1.0388);">20ms</div>
<div class="abs" style="left:16px;top:71.5px;width:103px;height:1px;background:#e6e6e6"></div>
<div class="t" style="left:16.00px;top:86.00px;font-size:14.3px;line-height:14.3px;font-weight:400;color:#3c4043;transform:scaleX(0.9990);">Avg :</div>
<div class="t" style="left:77.47px;top:86.00px;font-size:14.3px;line-height:14.3px;font-weight:700;color:#303336;transform:scaleX(1.0062);">22.4%</div>
</div>
<div class="abs" style="left:0;top:149px;width:318px;height:1px;background:#e0e0e0"></div>
<div class="t" style="left:15.78px;top:170.00px;font-size:15.9px;line-height:15.9px;font-weight:400;color:#3a3d40;transform:scaleX(1.0344);">QNS-AppNeta-Mobile1</div>
<div class="abs btn" style="left:268px;top:159px"></div>
<svg class="abs" style="left:278px;top:169px" width="14" height="14" viewBox="0 0 14 14"><path d="M5.4 3.6 L8.8 7 L5.4 10.4" fill="none" stroke="#2a7fab" stroke-width="1.6" stroke-linecap="round" stroke-linejoin="round"/></svg>
</div></body></html>
